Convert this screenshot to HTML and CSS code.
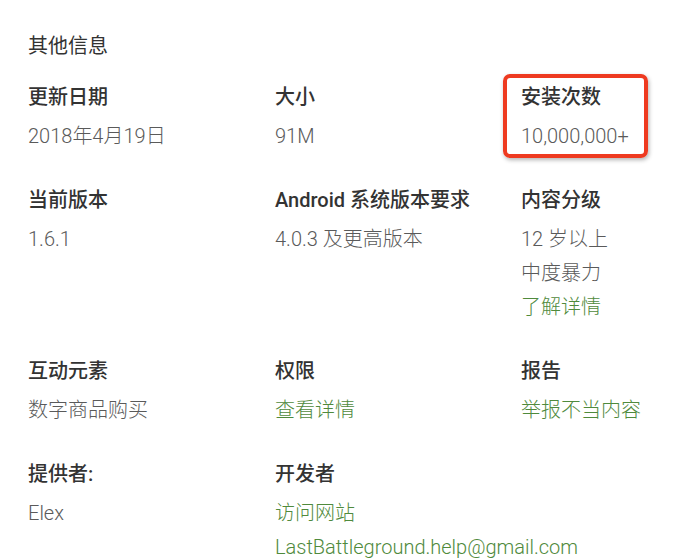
FILE: index.html
```html
<!DOCTYPE html>
<html lang="zh-CN">
<head>
<meta charset="utf-8">
<title>其他信息</title>
<link rel="stylesheet" href="styles.css">
</head>
<body>
<section class="info">
  <h2 class="info-title">其他信息</h2>
  <div class="info-grid">
    <div class="cell">
      <div class="label">更新日期</div>
      <div class="value">2018年4月19日</div>
    </div>
    <div class="cell">
      <div class="label">大小</div>
      <div class="value">91M</div>
    </div>
    <div class="cell highlighted">
      <div class="label">安装次数</div>
      <div class="value">10,000,000+</div>
      <span class="mark"></span>
    </div>

    <div class="cell">
      <div class="label">当前版本</div>
      <div class="value">1.6.1</div>
    </div>
    <div class="cell">
      <div class="label">Android 系统版本要求</div>
      <div class="value">4.0.3 及更高版本</div>
    </div>
    <div class="cell">
      <div class="label">内容分级</div>
      <div class="value">12 岁以上</div>
      <div class="value">中度暴力</div>
      <div class="value link">了解详情</div>
    </div>

    <div class="cell">
      <div class="label">互动元素</div>
      <div class="value">数字商品购买</div>
    </div>
    <div class="cell">
      <div class="label">权限</div>
      <div class="value link">查看详情</div>
    </div>
    <div class="cell">
      <div class="label">报告</div>
      <div class="value link">举报不当内容</div>
    </div>

    <div class="cell">
      <div class="label">提供者:</div>
      <div class="value">Elex</div>
    </div>
    <div class="cell wide">
      <div class="label">开发者</div>
      <div class="value link">访问网站</div>
      <div class="value link">LastBattleground.help@gmail.com</div>
    </div>
  </div>
</section>
</body>
</html>
```
FILE: styles.css
```css
html, body {
  margin: 0;
  padding: 0;
  background: #ffffff;
}
body {
  font-family: Roboto, "Noto Sans CJK SC", "Noto Sans", sans-serif;
  color: #333333;
  overflow: hidden;
}
.info {
  padding: 29px 0 0 28px;
}
.info-title {
  margin: 0 0 17px 0;
  font-size: 20px;
  line-height: 34px;
  font-weight: 400;
  color: #333333;
}
.info-grid {
  display: grid;
  grid-template-columns: 247px 246px 200px;
  row-gap: 30px;
}
.cell {
  position: relative;
  min-width: 0;
}
.label {
  font-size: 20px;
  line-height: 34px;
  font-weight: 500;
  color: #333333;
  margin-bottom: 5px;
  white-space: nowrap;
}
.value {
  font-size: 20px;
  line-height: 34px;
  font-weight: 300;
  color: #5a5a5a;
  white-space: nowrap;
}
.value.link {
  color: #4f8a3c;
}
.mark {
  position: absolute;
  left: -18px;
  top: -6px;
  width: 145px;
  height: 84px;
  box-sizing: border-box;
  border: 4px solid #ee3a20;
  border-radius: 7px;
  box-shadow: 1px 2px 4px rgba(0, 0, 0, 0.3);
}
```
